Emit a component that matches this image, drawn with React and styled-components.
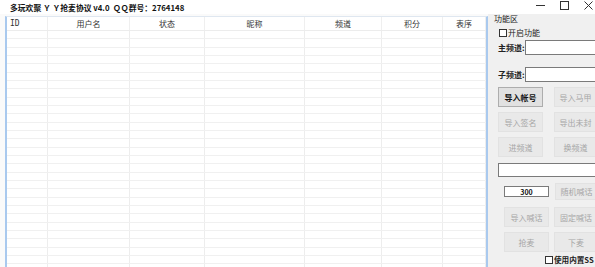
import React from 'react';
import styled, { createGlobalStyle } from 'styled-components';

const GlobalStyle = createGlobalStyle`
  html, body {
    margin: 0;
    padding: 0;
    background: #ffffff;
  }
  body {
    font-family: "Noto Sans CJK SC", "Noto Sans", sans-serif;
  }
`;

const columns = [
  { key: 'id', label: 'ID', width: 41, align: 'left' },
  { key: 'user', label: '用户名', width: 82 },
  { key: 'state', label: '状态', width: 75 },
  { key: 'nick', label: '昵称', width: 100 },
  { key: 'channel', label: '频道', width: 77 },
  { key: 'score', label: '积分', width: 61 },
  { key: 'order', label: '表序', width: 43 },
];

const gridCols = columns.map((c) => `${c.width}px`).join(' ');
const ROW_COUNT = 29;

const App = () => {
  return (
    <>
      <GlobalStyle />
      <Window>
        <TitleBar>
          <Title>多玩欢聚 Ｙ Ｙ抢麦协议 v4.0&nbsp;&nbsp;ＱＱ群号：2764148</Title>
          <Controls>
            <ControlBtn>
              <svg width="9" height="9" viewBox="0 0 9 9">
                <line x1="0" y1="4.5" x2="9" y2="4.5" stroke="#333" strokeWidth="1" />
              </svg>
            </ControlBtn>
            <ControlBtn>
              <svg width="9" height="9" viewBox="0 0 9 9">
                <rect x="0.5" y="0.5" width="8" height="8" fill="none" stroke="#333" strokeWidth="1" />
              </svg>
            </ControlBtn>
            <ControlBtn>
              <svg width="9" height="9" viewBox="0 0 9 9">
                <path d="M0.5 0.5 L8.5 8.5 M8.5 0.5 L0.5 8.5" stroke="#333" strokeWidth="1" />
              </svg>
            </ControlBtn>
          </Controls>
        </TitleBar>

        <Body>
          <TableArea>
            <Table>
              <HeaderRow>
                {columns.map((c) => (
                  <HeadCell key={c.key} $align={c.align}>{c.label}</HeadCell>
                ))}
              </HeaderRow>
              {Array.from({ length: ROW_COUNT }).map((_, i) => (
                <Row key={i}>
                  {columns.map((c) => (
                    <Cell key={c.key} />
                  ))}
                </Row>
              ))}
            </Table>
          </TableArea>

          <Panel>
            <GroupLabel>功能区</GroupLabel>
            <CheckRow $indent={5} $top={4}>
              <Box />
              <span>开启功能</span>
            </CheckRow>
            <Field $top={2}>
              <FieldLabel>主频道:</FieldLabel>
              <TextInput />
            </Field>
            <Field $top={12}>
              <FieldLabel>子频道:</FieldLabel>
              <TextInput />
            </Field>

            <ButtonRow $top={5}>
              <Btn>导入帐号</Btn>
              <Btn disabled $w={43}>导入马甲</Btn>
            </ButtonRow>
            <ButtonRow $top={5}>
              <Btn disabled>导入签名</Btn>
              <Btn disabled $w={43}>导出未封</Btn>
            </ButtonRow>
            <ButtonRow $top={5}>
              <Btn disabled>进频道</Btn>
              <Btn disabled $w={43}>换频道</Btn>
            </ButtonRow>

            <WideInput />

            <ButtonRow $top={6} $indent={6} $gap={6}>
              <NumInput defaultValue="300" />
              <Btn disabled $w={43} $h={17}>随机喊话</Btn>
            </ButtonRow>
            <ButtonRow $top={7} $indent={6} $gap={5}>
              <Btn disabled>导入喊话</Btn>
              <Btn disabled $w={44}>固定喊话</Btn>
            </ButtonRow>
            <ButtonRow $top={5} $indent={6} $gap={5}>
              <Btn disabled>抢麦</Btn>
              <Btn disabled $w={44}>下麦</Btn>
            </ButtonRow>
            <CheckRow $indent={51} $top={3}>
              <Box />
              <SmallText>使用内置SS</SmallText>
            </CheckRow>
          </Panel>
        </Body>
      </Window>
    </>
  );
};

export default App;

const Window = styled.div`
  width: 595px;
  height: 267px;
  display: flex;
  flex-direction: column;
  overflow: hidden;
  background: #ffffff;
`;

const TitleBar = styled.div`
  height: 14px;
  flex-shrink: 0;
  display: flex;
  align-items: flex-start;
  padding-left: 10px;
  background: #ffffff;
`;

const Title = styled.div`
  font-size: 7.8px;
  font-weight: 700;
  color: #111;
  line-height: 14px;
  padding-top: 1px;
  white-space: nowrap;
`;

const Controls = styled.div`
  margin-left: auto;
  display: flex;
  align-items: flex-start;
  gap: 14px;
  padding: 1px 2px 0 0;
  margin-top: -1px;
`;

const ControlBtn = styled.div`
  width: 10px;
  height: 10px;
  display: flex;
  align-items: center;
  justify-content: center;
`;

const Body = styled.div`
  flex: 1;
  display: flex;
  min-height: 0;
`;

const TableArea = styled.div`
  width: 488px;
  padding: 2px 0 0 5px;
  box-sizing: border-box;
  background: #fafafa;
  display: flex;
`;

const Table = styled.div`
  flex: 1;
  background: #ffffff;
  border-left: 2px solid #a9c9ee;
  border-right: 2px solid #a9c9ee;
  border-top: 1px solid #dfe7f0;
  overflow: hidden;
`;

const HeaderRow = styled.div`
  display: grid;
  grid-template-columns: ${gridCols};
  height: 13px;
  border-bottom: 1px solid #ececec;
`;

const HeadCell = styled.div`
  font-size: 8px;
  color: #333;
  line-height: 13px;
  text-align: ${(p) => p.$align || 'center'};
  padding-left: ${(p) => (p.$align === 'left' ? '3px' : '0')};
  border-right: 1px solid #efefef;
  white-space: nowrap;
  font-family: ${(p) => (p.$align === 'left' ? '"DejaVu Sans Mono", monospace' : 'inherit')};
`;

const Row = styled.div`
  display: grid;
  grid-template-columns: ${gridCols};
  height: 8.33px;
  box-sizing: border-box;
  border-bottom: 1px solid #f0f0f0;
`;

const Cell = styled.div`
  border-right: 1px solid #ededed;
`;

const Panel = styled.div`
  flex: 1;
  background: #f0f0f0;
  padding: 0 0 0 6px;
  display: flex;
  flex-direction: column;
  overflow: hidden;
  font-size: 8px;
  color: #222;
  white-space: nowrap;
`;

const GroupLabel = styled.div`
  line-height: 10px;
  height: 10px;
`;

const CheckRow = styled.div`
  display: flex;
  align-items: center;
  gap: 1px;
  margin-left: ${(p) => p.$indent || 0}px;
  margin-top: ${(p) => p.$top || 0}px;
  line-height: 10px;
  height: 10px;
`;

const SmallText = styled.span`
  font-size: 7.6px;
  font-weight: 600;
`;

const Box = styled.span`
  width: 8px;
  height: 8px;
  border: 1px solid #333;
  background: #fff;
  box-sizing: border-box;
  flex-shrink: 0;
`;

const Field = styled.div`
  display: flex;
  align-items: center;
  margin-top: ${(p) => p.$top || 0}px;
  margin-left: 4px;
  height: 15px;
`;

const FieldLabel = styled.span`
  width: 30px;
  font-weight: 600;
`;

const TextInput = styled.input`
  width: 80px;
  height: 15px;
  box-sizing: border-box;
  border: 1px solid #7a7a7a;
  background: #fff;
  padding: 0;
  flex-shrink: 0;
`;

const ButtonRow = styled.div`
  display: flex;
  align-items: center;
  gap: ${(p) => p.$gap || 11}px;
  margin-top: ${(p) => p.$top || 0}px;
  margin-left: ${(p) => (p.$indent ? p.$indent + 4 : 4)}px;
`;

const Btn = styled.button`
  width: ${(p) => p.$w || 45}px;
  height: ${(p) => p.$h || 20}px;
  flex-shrink: 0;
  box-sizing: border-box;
  padding: 0;
  font-family: inherit;
  font-size: 8px;
  background: ${(p) => (p.disabled ? '#e9e9e9' : '#e1e1e1')};
  border: 1px solid ${(p) => (p.disabled ? '#e2e2e2' : '#adadad')};
  color: ${(p) => (p.disabled ? '#a6a6a6' : '#111')};
  font-weight: ${(p) => (p.disabled ? 400 : 600)};
`;

const WideInput = styled.input`
  margin: 6px 0 0 4px;
  width: 100px;
  height: 14px;
  box-sizing: border-box;
  border: 1px solid #7a7a7a;
  background: #fff;
  padding: 0;
`;

const NumInput = styled.input`
  width: 45px;
  height: 11px;
  box-sizing: border-box;
  border: 1px solid #7a7a7a;
  background: #fff;
  padding: 0;
  text-align: center;
  font-family: inherit;
  font-size: 7px;
  font-weight: 600;
  color: #111;
  flex-shrink: 0;
`;
